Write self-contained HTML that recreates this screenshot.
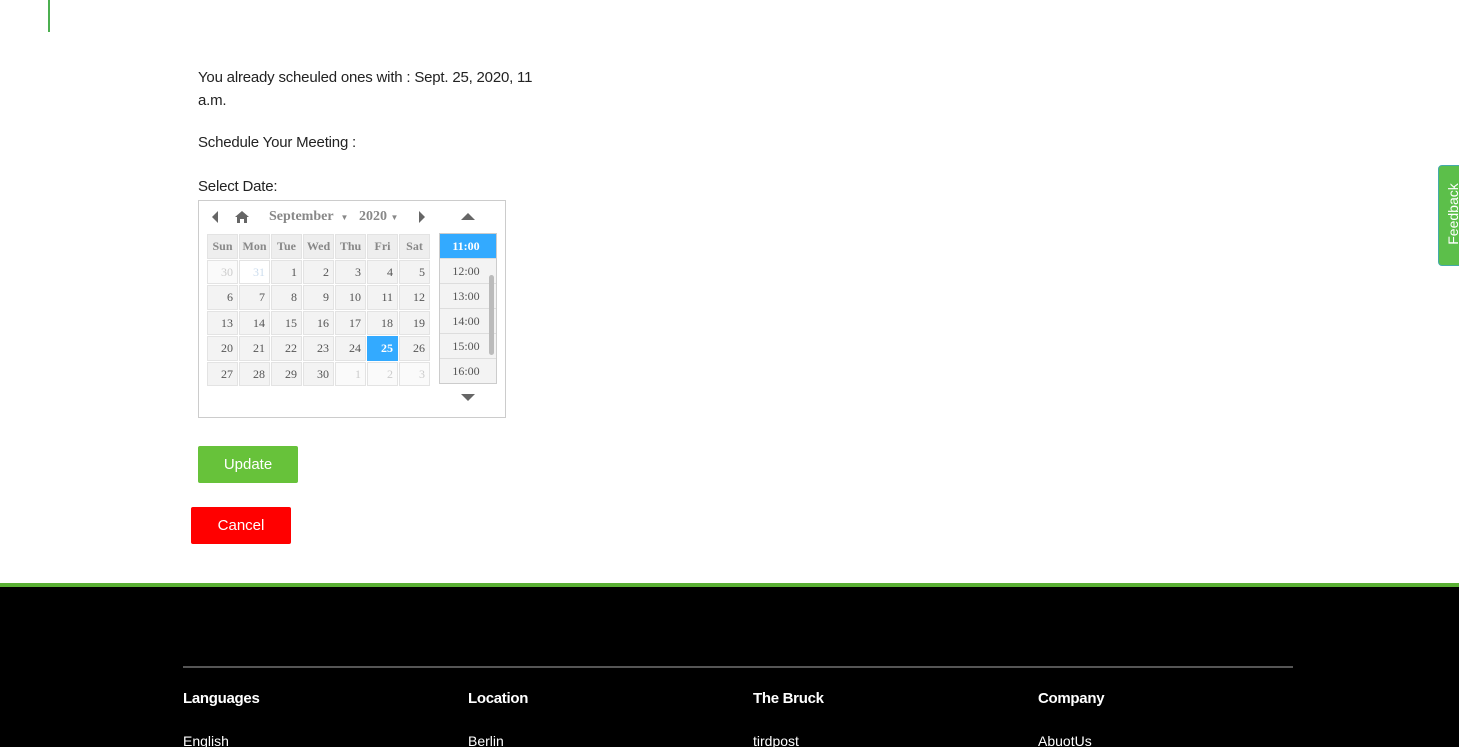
<!DOCTYPE html><html><head><style>
body{margin:0;width:1459px;height:743px;position:relative;overflow:hidden;background:#fff;font-family:"Liberation Sans",sans-serif;}
.a{position:absolute}
.t{font-size:15px;color:#222;letter-spacing:-0.2px}
.cal{left:198px;top:200px;width:308px;height:218px;border:1px solid #ccc;box-sizing:border-box}
.ser{font-family:"Liberation Serif",serif;color:#666;font-size:12px}
.g7{position:absolute;left:207px;top:234px;display:grid;grid-template-columns:repeat(7,31px);grid-auto-rows:24.5px;gap:1px}
.g7 div{background:#f3f3f3;border:1px solid #e3e3e3;box-sizing:border-box;text-align:right;padding-right:4px;line-height:22px;font-family:"Liberation Serif",serif;font-size:12px;color:#555}
.g7 .h{background:#eee;text-align:center;padding:0;color:#888;font-weight:bold}
.g7 .o{background:#fafafa;color:#ccc}
.g7 .s{background:#3af;color:#fff;font-weight:bold;border-color:#3af}
.tl{left:439px;top:233px;width:58px;height:151px;border:1px solid #ccc;box-sizing:border-box;overflow:hidden}
.tl div{height:24px;line-height:24px;border-bottom:1px solid #ddd;background:#f3f3f3;text-align:center;font-family:"Liberation Serif",serif;font-size:12px;color:#555;padding-right:4px}
.btn{color:#fff;font-size:15px;text-align:center;border-radius:2px}
.f{color:#fff;font-size:15px;font-weight:bold;letter-spacing:-0.3px}
.g{color:#fff;font-size:14px}
</style></head><body>
<div class="a" style="left:48px;top:0;width:2px;height:32px;background:#4caf50"></div>
<div class="a t" style="left:198px;top:66px;line-height:23px;width:360px">You already scheuled ones with : Sept. 25, 2020, 11<br>a.m.</div>
<div class="a t" style="left:198px;top:134px">Schedule Your Meeting :</div>
<div class="a t" style="left:198px;top:178px">Select Date:</div>
<div class="a cal"></div>
<div class="a" style="left:212px;top:211px;width:0;height:0;border-top:6px solid transparent;border-bottom:6px solid transparent;border-right:6px solid #666"></div>
<svg class="a" style="left:234px;top:210px" width="16" height="14"><path d="M1 7 L8 1 L15 7 L13 7 L13 13 L10 13 L10 9 L6 9 L6 13 L3 13 L3 7Z" fill="#666"/></svg>
<div class="a ser" style="left:269px;top:209px;font-size:14px;font-weight:bold;color:#888">September&nbsp; <span style="font-size:8px">▼</span>&nbsp;&nbsp; 2020 <span style="font-size:8px">▼</span></div>
<div class="a" style="left:419px;top:211px;width:0;height:0;border-top:6px solid transparent;border-bottom:6px solid transparent;border-left:6px solid #666"></div>
<div class="a" style="left:461px;top:213px;width:0;height:0;border-left:7px solid transparent;border-right:7px solid transparent;border-bottom:7px solid #666"></div>
<div class="a" style="left:461px;top:394px;width:0;height:0;border-left:7px solid transparent;border-right:7px solid transparent;border-top:7px solid #666"></div>
<div class="g7">
<div class="h">Sun</div><div class="h">Mon</div><div class="h">Tue</div><div class="h">Wed</div><div class="h">Thu</div><div class="h">Fri</div><div class="h">Sat</div>
<div class="o">30</div><div class="o" style="color:#cde;background:#fff">31</div><div>1</div><div>2</div><div>3</div><div>4</div><div>5</div>
<div>6</div><div>7</div><div>8</div><div>9</div><div>10</div><div>11</div><div>12</div>
<div>13</div><div>14</div><div>15</div><div>16</div><div>17</div><div>18</div><div>19</div>
<div>20</div><div>21</div><div>22</div><div>23</div><div>24</div><div class="s">25</div><div>26</div>
<div>27</div><div>28</div><div>29</div><div>30</div><div class="o">1</div><div class="o">2</div><div class="o">3</div>
</div>
<div class="a tl"><div style="background:#3af;color:#fff;font-weight:bold">11:00</div><div>12:00</div><div>13:00</div><div>14:00</div><div>15:00</div><div>16:00</div></div>
<div class="a" style="left:489px;top:275px;width:5px;height:80px;background:#bbb;border-radius:3px"></div>
<div class="a btn" style="left:198px;top:446px;width:100px;height:37px;line-height:37px;background:#67c23a">Update</div>
<div class="a btn" style="left:191px;top:507px;width:100px;height:37px;line-height:37px;background:#f00">Cancel</div>
<div class="a" style="left:1438px;top:165px;width:30px;height:99px;background:#5cbf4a;border-radius:4px;border:1px solid #4aa"></div>
<div class="a" style="left:1418px;top:206px;transform:rotate(-90deg);color:#fff;font-size:14px;width:70px;text-align:center">Feedback</div>
<div class="a" style="left:0;top:583px;width:1459px;height:160px;background:#000;border-top:4px solid #5ab034"></div>
<div class="a" style="left:183px;top:666px;width:1110px;height:2px;background:#555"></div>
<div class="a f" style="left:183px;top:690px">Languages</div>
<div class="a f" style="left:468px;top:690px">Location</div>
<div class="a f" style="left:753px;top:690px">The Bruck</div>
<div class="a f" style="left:1038px;top:690px">Company</div>
<div class="a g" style="left:183px;top:733px">English</div>
<div class="a g" style="left:468px;top:733px">Berlin</div>
<div class="a g" style="left:753px;top:733px">tirdpost</div>
<div class="a g" style="left:1038px;top:733px">AbuotUs</div>
</body></html>
